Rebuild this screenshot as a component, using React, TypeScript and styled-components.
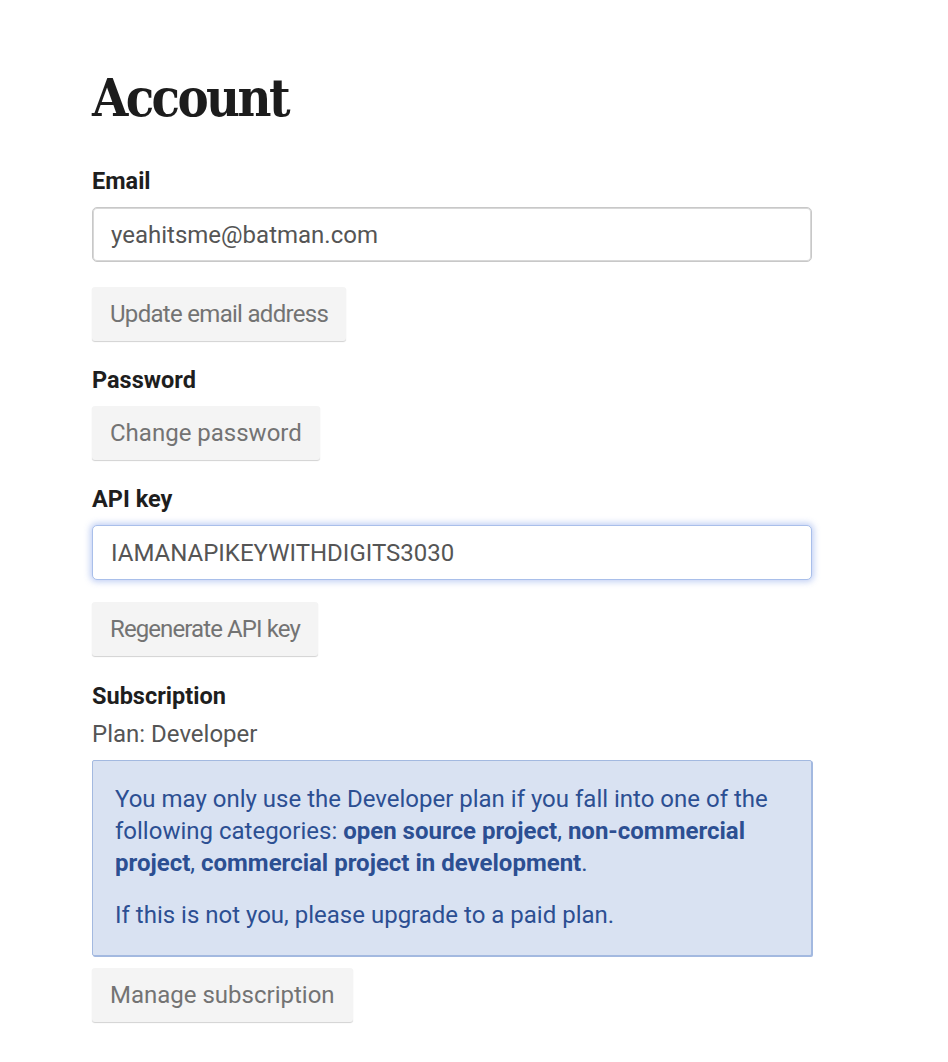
import React from "react";
import styled, { createGlobalStyle } from "styled-components";

const Global = createGlobalStyle`
  html, body { margin: 0; padding: 0; background: #fff; }
  body { font-family: Roboto, "Noto Sans", sans-serif; }
`;

const Page = styled.main`
  width: 720px;
  padding: 66px 0 40px 92px;
  display: flex;
  flex-direction: column;
`;

const Title = styled.h1`
  margin: 0 0 38px;
  font-family: "DejaVu Serif", "Liberation Serif", serif;
  font-stretch: condensed;
  font-weight: 700;
  font-size: 52px;
  line-height: 64px;
  color: #1c1c1c;
  letter-spacing: -2.6px;
`;

const Label = styled.div`
  font-size: 23.5px;
  font-weight: 700;
  color: #1e1e1e;
  line-height: 26px;
  margin-bottom: 13px;
`;

const Input = styled.input<{ $focus?: boolean }>`
  box-sizing: border-box;
  width: 720px;
  height: 55px;
  padding: 0 18px;
  font-family: Roboto, sans-serif;
  font-size: 24px;
  color: #555;
  border-radius: 5px;
  background: #fff;
  outline: none;
  border: 1px solid ${(p) => (p.$focus ? "#a9bfea" : "#c8c8c8")};
  box-shadow: ${(p) =>
    p.$focus
      ? "0 0 6px 2px rgba(120,150,230,0.45)"
      : "inset 0 0 0 1px #d8d8d8"};
`;

const Button = styled.button<{ $top?: number; $tight?: number }>`
  align-self: flex-start;
  margin-top: ${(p) => p.$top ?? 25}px;
  height: 54px;
  padding: 0 18px;
  font-family: Roboto, sans-serif;
  font-size: 24px;
  letter-spacing: ${(p) => p.$tight ?? 0}px;
  color: #737373;
  background: #f4f4f4;
  border: none;
  border-radius: 3px;
  box-shadow: 0 1px 1px rgba(0, 0, 0, 0.18);
  cursor: pointer;
`;

const Section = styled.section<{ $gap?: number }>`
  display: flex;
  flex-direction: column;
  margin-bottom: ${(p) => p.$gap ?? 28}px;
`;

const Plan = styled.div`
  font-size: 24px;
  color: #555;
  line-height: 26px;
  margin-top: -1px;
  margin-bottom: 13px;
`;

const Alert = styled.div`
  box-sizing: border-box;
  width: 720px;
  padding: 22px 22px 24px;
  background: #d9e2f2;
  border: 1px solid #a3b9e0;
  box-shadow: 1px 1px 0 #a3b9e0;
  border-radius: 2px;
  color: #2c4f92;
  font-size: 24px;
  line-height: 32px;
  & p { margin: 0; }
  & p + p { margin-top: 20px; }
  & b { font-weight: 700; }
`;

export default function App() {
  return (
    <>
      <Global />
      <Page>
        <Title>Account</Title>
        <Section $gap={26}>
          <Label>Email</Label>
          <Input defaultValue="yeahitsme@batman.com" />
          <Button $tight={-0.7}>Update email address</Button>
        </Section>
        <Section $gap={26}>
          <Label>Password</Label>
          <Button $top={0}>Change password</Button>
        </Section>
        <Section $gap={27}>
          <Label>API key</Label>
          <Input $focus defaultValue="IAMANAPIKEYWITHDIGITS3030" />
          <Button $top={22} $tight={-0.9}>Regenerate API key</Button>
        </Section>
        <Section>
          <Label>Subscription</Label>
          <Plan>Plan: Developer</Plan>
          <Alert>
            <p>
              You may only use the Developer plan if you fall into one of the
              following categories: <b>open source project</b>,{" "}
              <b>non-commercial project</b>,{" "}
              <b>commercial project in development</b>.
            </p>
            <p>If this is not you, please upgrade to a paid plan.</p>
          </Alert>
          <Button $top={12}>Manage subscription</Button>
        </Section>
      </Page>
    </>
  );
}
